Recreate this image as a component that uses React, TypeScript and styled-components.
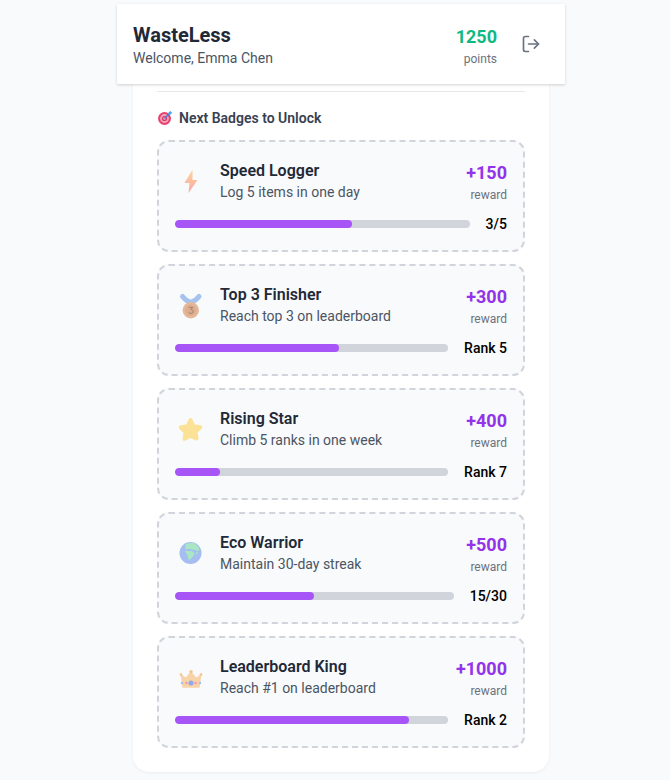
import React from "react";
import styled, { createGlobalStyle } from "styled-components";
import { LogOut } from "lucide-react";

// style
const GlobalStyle = createGlobalStyle`
  html, body {
    margin: 0;
    padding: 0;
    height: 780px;
    overflow: hidden;
    background: #f9fafb;
    font-family: Roboto, "Noto Sans", sans-serif;
  }
`;
const Shell = styled.div`
  width: 448px;
  margin-left: 117px;
  padding-top: 4px;
`;
const Header = styled.header`
  position: relative;
  z-index: 2;
  height: 80px;
  box-sizing: border-box;
  padding: 0 16px;
  display: flex;
  align-items: center;
  justify-content: space-between;
  background: #fff;
  box-shadow: 0 1px 3px rgba(0, 0, 0, 0.12), 0 1px 2px rgba(0, 0, 0, 0.06);
`;
const Brand = styled.h1`
  margin: 0;
  padding-top: 2px;
  font-size: 20px;
  line-height: 26px;
  font-weight: 700;
  color: #1f2937;
`;
const Welcome = styled.p`
  margin: 0;
  font-size: 14px;
  line-height: 20px;
  color: #4b5563;
`;
const HeaderRight = styled.div`
  display: flex;
  align-items: center;
  gap: 16px;
`;
const Points = styled.div`
  padding-top: 1px;
  text-align: right;
`;
const PointsValue = styled.div`
  font-size: 18px;
  line-height: 28px;
  font-weight: 700;
  color: #10b981;
`;
const PointsLabel = styled.div`
  font-size: 12px;
  line-height: 16px;
  color: #6b7280;
`;
const LogoutButton = styled.button`
  display: flex;
  padding: 8px;
  border: 0;
  background: none;
  color: #6b7280;
`;
const Panel = styled.main`
  margin: 0 16px;
  padding: 7px 24px 24px;
  background: #fff;
  border-radius: 0 0 16px 16px;
  box-shadow: 0 1px 3px rgba(0, 0, 0, 0.06);
`;
const Divider = styled.hr`
  margin: 0 0 16px;
  border: 0;
  border-top: 1px solid #e5e7eb;
`;
const SectionTitle = styled.h2`
  margin: 0 0 12px;
  display: flex;
  align-items: center;
  gap: 6px;
  height: 20px;
  font-size: 14px;
  font-weight: 600;
  color: #374151;
`;
const BadgeList = styled.div`
  display: flex;
  flex-direction: column;
  gap: 12px;
`;
const BadgeCard = styled.article`
  height: 112px;
  box-sizing: border-box;
  padding: 16px;
  background: #f9fafb;
  border: 2px dashed #d1d5db;
  border-radius: 12px;
`;
const BadgeTop = styled.div`
  display: flex;
  align-items: flex-start;
  justify-content: space-between;
  margin-bottom: 11px;
`;
const BadgeInfo = styled.div`
  display: flex;
  align-items: center;
  gap: 12px;
`;
const IconSlot = styled.div`
  width: 33px;
  height: 36px;
  display: flex;
  align-items: center;
  justify-content: center;
`;
const BadgeName = styled.h3`
  margin: 0;
  padding-top: 2px;
  font-size: 16px;
  line-height: 22px;
  font-weight: 600;
  color: #1f2937;
`;
const BadgeDesc = styled.p`
  margin: 0;
  font-size: 14px;
  line-height: 20px;
  color: #4b5563;
`;
const Reward = styled.div`
  padding-top: 1px;
  text-align: right;
`;
const RewardValue = styled.div`
  font-size: 18px;
  line-height: 28px;
  font-weight: 700;
  color: #9333ea;
`;
const RewardLabel = styled.div`
  font-size: 12px;
  line-height: 16px;
  color: #6b7280;
`;
const ProgressRow = styled.div`
  display: flex;
  align-items: center;
  gap: 16px;
`;
const Track = styled.div`
  flex: 1;
  height: 8px;
  background: #d1d5db;
  border-radius: 999px;
  overflow: hidden;
`;
const Fill = styled.div`
  height: 100%;
  background: #a855f7;
  border-radius: 999px;
`;
const ProgressLabel = styled.span`
  font-size: 14px;
  line-height: 20px;
  font-weight: 500;
  color: #000;
`;

// emoji drawings, all on a 30x30 canvas
const Target = () => (
  <svg width="16" height="16" viewBox="0 0 16 16">
    <circle cx="7.5" cy="8.5" r="6.5" fill="#e8436e" />
    <circle cx="7.5" cy="8.5" r="4.4" fill="#f4a6bd" />
    <circle cx="7.5" cy="8.5" r="2.6" fill="#d9386a" />
    <circle cx="7.5" cy="8.5" r="1.2" fill="#f7b6c8" />
    <path d="M7.5 8.5 13 3" stroke="#3f7fd0" strokeWidth="1.4" />
    <path d="M11.5 2.5 13.5 .8 14 2.2 15.5 2.6 13.6 4.6 11.8 4.2Z" fill="#4aa3ee" />
  </svg>
);
const Bolt = () => (
  <svg width="30" height="30" viewBox="0 0 30 30">
    <defs>
      <linearGradient id="bolt" x1="0" y1="0" x2="0" y2="1">
        <stop offset="0" stopColor="#fcd79e" />
        <stop offset="1" stopColor="#fba6a6" />
      </linearGradient>
    </defs>
    <path d="M15.500 4.500 7.500 18H12.500L11.500 28 20.500 15H15.500Z" fill="url(#bolt)" />
  </svg>
);
const Medal = () => (
  <svg width="30" height="30" viewBox="0 0 30 30">
    <path d="M5.500 7.500Q9 12 13.700 13.500Q18.500 12 22 7.500" fill="none" stroke="#a5c3ee" strokeWidth="5" strokeLinecap="round" />
    <circle cx="13.800" cy="21.300" r="8.200" fill="#e4b899" />
    <circle cx="13.800" cy="21.300" r="5.800" fill="#dcae8f" />
    <path d="M11.800 18.300h4l-1.900 2.300c1.400 0 2.200.7 2.200 1.800 0 1.200-.9 2-2.200 2-.9 0-1.700-.4-2.200-1" fill="none" stroke="#a37e66" strokeWidth="1" />
  </svg>
);
const Star = () => (
  <svg width="30" height="30" viewBox="0 0 30 30">
    <path
      transform="translate(.5 3.500)"
      d="M13 1.500c.9 0 1.500.6 1.900 1.500l2.400 5 5.500.8c2 .3 2.700 2 1.300 3.400l-4 3.900.9 5.500c.3 2-1.200 3-3 2.100L13 21.500l-4.900 2.600c-1.800.9-3.300-.1-3-2.100l.9-5.500-4-3.900C.6 11.200 1.300 9.100 3.200 8.800L8.700 8l2.400-5c.4-.9 1-1.500 1.900-1.500Z"
      fill="#fbe296"
    />
  </svg>
);
const Globe = () => (
  <svg width="30" height="30" viewBox="0 0 30 30">
    <g transform="translate(2.500 5) scale(.917)">
      <circle cx="12" cy="12" r="12" fill="#a5bdf0" />
      <path d="M6.500 2.500 11 1 15.600.7 21 5.500 21.500 10 15.600 8.400 10 7.300 6.500 8.400Z" fill="#a8e6c4" />
      <path d="M5.800 9.800H13.800L16.700 12.700 13 18 10 20 8.700 14.500Z" fill="#a8e6c4" />
      <path d="M17.500 10.500 20 11 18.500 14Z" fill="#a8e6c4" />
    </g>
  </svg>
);
const Crown = () => (
  <svg width="30" height="30" viewBox="0 0 30 30">
    <g transform="translate(2.500 9)">
      <path
        d="M2 5.500 6.500 8.500 11.500 2.500 16.500 8.500 21 5.500 19.500 17H3.500Z"
        fill="#f8d3a8"
        stroke="#f8d3a8"
        strokeWidth="1.500"
        strokeLinejoin="round"
      />
      <circle cx="11.500" cy="1.700" r="1.700" fill="#f5c48f" />
      <circle cx="1.500" cy="4.700" r="1.400" fill="#f5c48f" />
      <circle cx="21.500" cy="4.700" r="1.400" fill="#f5c48f" />
      <circle cx="11.500" cy="13" r="2.500" fill="#8fa9ee" />
      <circle cx="7" cy="13" r="1.300" fill="#f09cb8" />
      <circle cx="16" cy="13" r="1.300" fill="#f09cb8" />
      <circle cx="2.500" cy="13" r="1.200" fill="#a3c1ee" />
      <circle cx="20.500" cy="13" r="1.200" fill="#a3c1ee" />
    </g>
  </svg>
);

// data
const badges = [
  { name: "Speed Logger", desc: "Log 5 items in one day", reward: "+150", label: "3/5", pct: 60, icon: <Bolt /> },
  { name: "Top 3 Finisher", desc: "Reach top 3 on leaderboard", reward: "+300", label: "Rank 5", pct: 60, icon: <Medal /> },
  { name: "Rising Star", desc: "Climb 5 ranks in one week", reward: "+400", label: "Rank 7", pct: 16.5, icon: <Star /> },
  { name: "Eco Warrior", desc: "Maintain 30-day streak", reward: "+500", label: "15/30", pct: 50, icon: <Globe /> },
  { name: "Leaderboard King", desc: "Reach #1 on leaderboard", reward: "+1000", label: "Rank 2", pct: 85.7, icon: <Crown /> },
];

// render
function App() {
  return (
    <Shell>
      <GlobalStyle />
      <Header>
        <div>
          <Brand>WasteLess</Brand>
          <Welcome>Welcome, Emma Chen</Welcome>
        </div>
        <HeaderRight>
          <Points>
            <PointsValue>1250</PointsValue>
            <PointsLabel>points</PointsLabel>
          </Points>
          <LogoutButton aria-label="Log out">
            <LogOut size={20} strokeWidth={2} />
          </LogoutButton>
        </HeaderRight>
      </Header>
      <Panel>
        <Divider />
        <SectionTitle>
          <Target />
          Next Badges to Unlock
        </SectionTitle>
        <BadgeList>
          {badges.map((b) => (
            <BadgeCard key={b.name}>
              <BadgeTop>
                <BadgeInfo>
                  <IconSlot>{b.icon}</IconSlot>
                  <div>
                    <BadgeName>{b.name}</BadgeName>
                    <BadgeDesc>{b.desc}</BadgeDesc>
                  </div>
                </BadgeInfo>
                <Reward>
                  <RewardValue>{b.reward}</RewardValue>
                  <RewardLabel>reward</RewardLabel>
                </Reward>
              </BadgeTop>
              <ProgressRow>
                <Track>
                  <Fill style={{ width: `${b.pct}%` }} />
                </Track>
                <ProgressLabel>{b.label}</ProgressLabel>
              </ProgressRow>
            </BadgeCard>
          ))}
        </BadgeList>
      </Panel>
    </Shell>
  );
}

export default App;
